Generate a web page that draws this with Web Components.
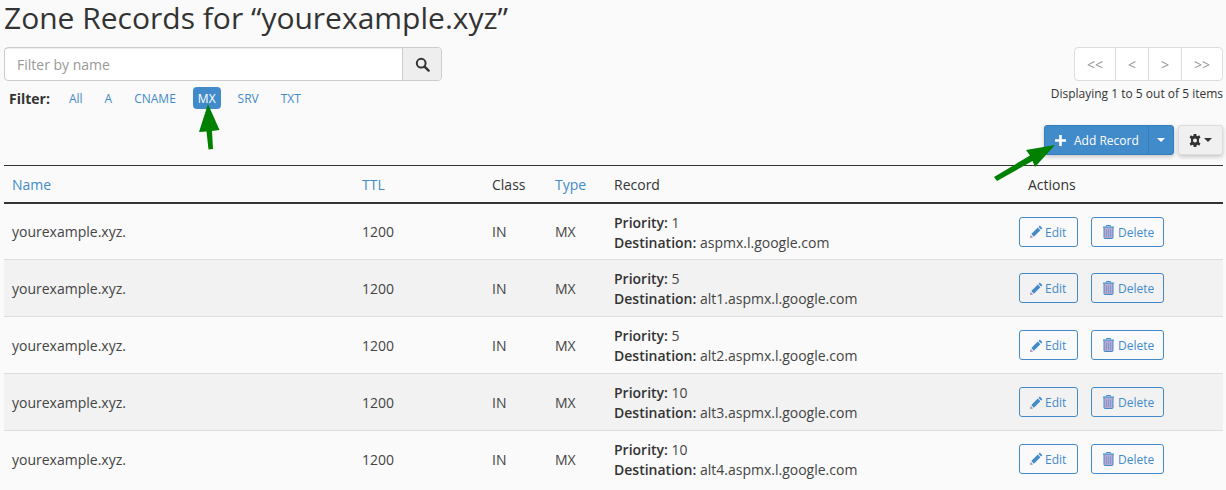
<!DOCTYPE html>
<html lang="en">
<head>
<meta charset="utf-8">
<title>Zone Records</title>
<style>
  html, body { margin: 0; padding: 0; background: #fafafa; height: 490px; overflow: hidden; }
  body { font-family: "Open Sans", sans-serif; font-size: 14px; color: #333; }
</style>
</head>
<body>
<zone-page></zone-page>
<script>
const BLUE = '#428bca'

const ICONS = {
  search: '<svg width="15" height="15" viewBox="0 0 15 15"><circle cx="6.200" cy="6.200" r="4.400" fill="none" stroke="#333" stroke-width="2"/><path d="M9.600 9.600l4 4" stroke="#333" stroke-width="2.400" stroke-linecap="round"/></svg>',
  plus: '<svg width="11" height="11" viewBox="0 0 11 11"><path d="M4.200 0h2.600v4.200H11v2.600H6.800V11H4.200V6.800H0V4.200h4.200z" fill="#fff"/></svg>',
  caret: '<svg width="8" height="4" viewBox="0 0 8 4"><path d="M0 0h8L4 4z" fill="currentColor"/></svg>',
  gear: '<svg width="12" height="13" viewBox="0 0 12 13"><path fill="#333" fill-rule="evenodd" d="M4.700 0h2.600l.3 1.800 1 .5L10.200 1.300 11.500 3.500 10 4.700v3.600l1.500 1.200-1.300 2.200-1.600-1-1 .5-.3 1.800H4.700l-.3-1.800-1-.5-1.600 1L.5 9.500 2 8.300V4.700L.5 3.500 1.800 1.300l1.600 1 1-.5zM6 4.500a2 2 0 1 0 0 4a2 2 0 0 0 0-4z"/></svg>',
  pencil: '<svg width="13" height="13" viewBox="0 0 13 13"><path fill="#428bca" d="M9.800.6l2.600 2.600-1.300 1.300-2.600-2.600zM7.800 2.600l2.600 2.600-6.500 6.500-2.600-2.600z"/><path fill="#a88bb8" d="M.6 9.900l2.500 2.500-3.100.6z"/></svg>',
  trash: '<svg width="11" height="14" viewBox="0 0 11 14"><path fill="none" stroke="#428bca" stroke-width="1" d="M3.500 1.500V.5h4v1"/><path fill="#428bca" d="M0 1.500h11v1.300H0z"/><path fill="#bda6d0" stroke="#428bca" stroke-width="1" d="M1 3v9.500a1 1 0 0 0 1 1h7a1 1 0 0 0 1-1V3"/><path stroke="#7f9ad0" stroke-width="1" d="M3.500 4.500v7.500M5.500 4.500v7.500M7.500 4.500v7.500"/></svg>'
}

class PagerBar extends HTMLElement {
  constructor(){
    super()
    this.attachShadow({mode:'open'})
    this.shadowRoot.innerHTML = `
      <style>
        :host { display: flex; height: 34px; box-sizing: border-box; border: 1px solid #ddd; border-radius: 4px; background: #fff; }
        span { display: flex; align-items: center; justify-content: center; color: #999; font-size: 14px; border-left: 1px solid #ddd; width: 32px; }
        span:first-of-type { border-left: 0; width: 40px; }
        span:last-of-type { width: 40px; }
      </style>
      <span>&lt;&lt;</span><span>&lt;</span><span>&gt;</span><span>&gt;&gt;</span>`
  }
}

class SearchBox extends HTMLElement {
  constructor(){
    super()
    this.attachShadow({mode:'open'})
    this.shadowRoot.innerHTML = `
      <style>
        :host { display: flex; width: 438px; height: 34px; box-sizing: border-box; border: 1px solid #ccc; border-radius: 4px; background: #fff; }
        .field { flex: 1; padding: 1px 0 0 12px; line-height: 32px; color: #999; font-size: 14px; box-shadow: inset 0 1px 1px rgba(0,0,0,.075); }
        .addon { width: 38px; display: flex; align-items: center; justify-content: center; background: #eee; border-left: 1px solid #ccc; border-radius: 0 3px 3px 0; }
      </style>
      <div class="field">Filter by name</div>
      <div class="addon">${ICONS.search}</div>`
  }
}

class TypeFilter extends HTMLElement {
  constructor(){
    super()
    this.attachShadow({mode:'open'})
    const items = ['All','A','CNAME','MX','SRV','TXT']
    this.shadowRoot.innerHTML = `
      <style>
        :host { display: flex; align-items: center; height: 22px; font-size: 12px; }
        b { font-size: 14px; color: #333; margin: 1px 14px 0 5px; font-weight: 700; }
        a { color: #428bca; padding: 1px 5px 0; line-height: 21px; margin-right: 12px; border-radius: 4px; }
        a.on { background: #428bca; color: #fff; }
      </style>
      <b>Filter:</b>
      ${items.map(t => `<a class="${t === 'MX' ? 'on' : ''}">${t}</a>`).join('')}`
  }
}

class AddToolbar extends HTMLElement {
  constructor(){
    super()
    this.attachShadow({mode:'open'})
    this.shadowRoot.innerHTML = `
      <style>
        :host { display: flex; justify-content: flex-end; height: 30px; font-size: 12px; }
        .split { display: flex; width: 130px; background: ${BLUE}; border: 1px solid #357ebd; box-sizing: border-box; border-radius: 3px; color: #fff; box-shadow: 0 2px 4px rgba(0,0,0,.2); }
        .main { width: 104px; display: flex; align-items: center; padding-left: 10px; gap: 8px; box-sizing: border-box; border-right: 1px solid #357ebd; }
        .drop { flex: 1; display: flex; align-items: center; justify-content: center; }
        .gear { width: 45px; margin-left: 4px; box-sizing: border-box; display: flex; align-items: center; justify-content: center; gap: 3px; background: #f0f0f0; border: 1px solid #ddd; border-radius: 3px; color: #333; box-shadow: 0 2px 4px rgba(0,0,0,.2); }
      </style>
      <div class="split">
        <div class="main">${ICONS.plus}<span>Add Record</span></div>
        <div class="drop">${ICONS.caret}</div>
      </div>
      <div class="gear">${ICONS.gear}${ICONS.caret}</div>`
  }
}

const COLS = 'grid-template-columns: 350px 130px 63px 59px 1fr 212px;'

class RecordHead extends HTMLElement {
  constructor(){
    super()
    this.attachShadow({mode:'open'})
    this.shadowRoot.innerHTML = `
      <style>
        :host { display: grid; ${COLS} height: 39px; box-sizing: border-box; border-top: 1px solid #333; border-bottom: 2px solid #333; align-items: center; font-size: 14px; }
        div { padding-left: 8px; }
        .sort { color: #428bca; }
        .act { padding-left: 17px; }
      </style>
      <div class="sort">Name</div><div class="sort">TTL</div><div>Class</div><div class="sort">Type</div><div>Record</div><div class="act">Actions</div>`
  }
}

class RecordRow extends HTMLElement {
  constructor(){
    super()
    this.attachShadow({mode:'open'})
    const pri = this.getAttribute('priority')
    const dest = this.getAttribute('dest')
    this.shadowRoot.innerHTML = `
      <style>
        :host { display: grid; ${COLS} height: 57px; box-sizing: border-box; border-bottom: 1px solid #ddd; align-items: center; font-size: 14px; color: #444; }
        :host([odd]) { background: #f2f2f2; }
        :host([first]) { height: 56px; }
        :host([last]) { border-bottom: 0; }
        :host([last]) .act { margin-bottom: 2px; }
        :host([last]) .rec { margin-top: 0; }
        div { padding-left: 8px; }
        .rec { line-height: 20px; margin-top: 2px; }
        b { font-weight: 600; color: #333; }
        .act { display: flex; gap: 13px; padding-left: 8px; }
        .btn { display: flex; align-items: center; height: 30px; box-sizing: border-box; border: 1px solid ${BLUE}; border-radius: 3px; color: ${BLUE}; font-size: 12px; }
        .btn span { padding-top: 1px; }
        .edit { width: 59px; padding: 0 0 0 10px; gap: 2px; }
        .del { width: 73px; padding: 0 0 0 11px; gap: 4px; }
      </style>
      <div>yourexample.xyz.</div><div>1200</div><div>IN</div><div>MX</div>
      <div class="rec"><b>Priority:</b> ${pri}<br><b>Destination:</b> ${dest}</div>
      <div class="act">
        <div class="btn edit">${ICONS.pencil}<span>Edit</span></div>
        <div class="btn del">${ICONS.trash}<span>Delete</span></div>
      </div>`
  }
}

class ZonePage extends HTMLElement {
  constructor(){
    super()
    this.attachShadow({mode:'open'})
    const rows = [['1','aspmx.l.google.com'],['5','alt1.aspmx.l.google.com'],['5','alt2.aspmx.l.google.com'],['10','alt3.aspmx.l.google.com'],['10','alt4.aspmx.l.google.com']]
    this.shadowRoot.innerHTML = `
      <style>
        :host { display: block; position: relative; height: 490px; padding: 0 3px 0 4px; box-sizing: border-box; }
        h1 { margin: 0; font-size: 30px; font-weight: 400; line-height: 36px; height: 47px; color: #333; }
        .top { display: flex; justify-content: space-between; }
        .right { display: flex; flex-direction: column; align-items: flex-end; }
        .count { font-size: 12px; color: #333; margin-top: 4px; line-height: 18px; }
        .left { display: flex; flex-direction: column; gap: 6px; }
        add-toolbar { margin-top: 16px; }
        record-head { margin-top: 10px; }
        svg.arrows { position: absolute; left: 0; top: 0; pointer-events: none; }
      </style>
      <h1>Zone Records for “yourexample.xyz”</h1>
      <div class="top">
        <div class="left"><search-box></search-box><type-filter></type-filter></div>
        <div class="right"><pager-bar></pager-bar><div class="count">Displaying 1 to 5 out of 5 items</div></div>
      </div>
      <add-toolbar></add-toolbar>
      <record-head></record-head>
      ${rows.map((r,i) => `<record-row ${i % 2 ? 'odd' : ''} ${i === 0 ? 'first' : ''} ${i === 4 ? 'last' : ''} priority="${r[0]}" dest="${r[1]}"></record-row>`).join('')}
      <svg class="arrows" width="1226" height="490" viewBox="0 0 1226 490">
        <path fill="#008000" d="M208 104L219.500 130 212 131 213 149 208.500 149.500 206.500 131.500 199 132z"/>
        <path fill="#008000" d="M1055 145L1035 167 1032.500 161 997 181 994 177 1030 155.500 1026 150z"/>
      </svg>`
  }
}

customElements.define('pager-bar', PagerBar)
customElements.define('search-box', SearchBox)
customElements.define('type-filter', TypeFilter)
customElements.define('add-toolbar', AddToolbar)
customElements.define('record-head', RecordHead)
customElements.define('record-row', RecordRow)
customElements.define('zone-page', ZonePage)
</script>
</body>
</html>
